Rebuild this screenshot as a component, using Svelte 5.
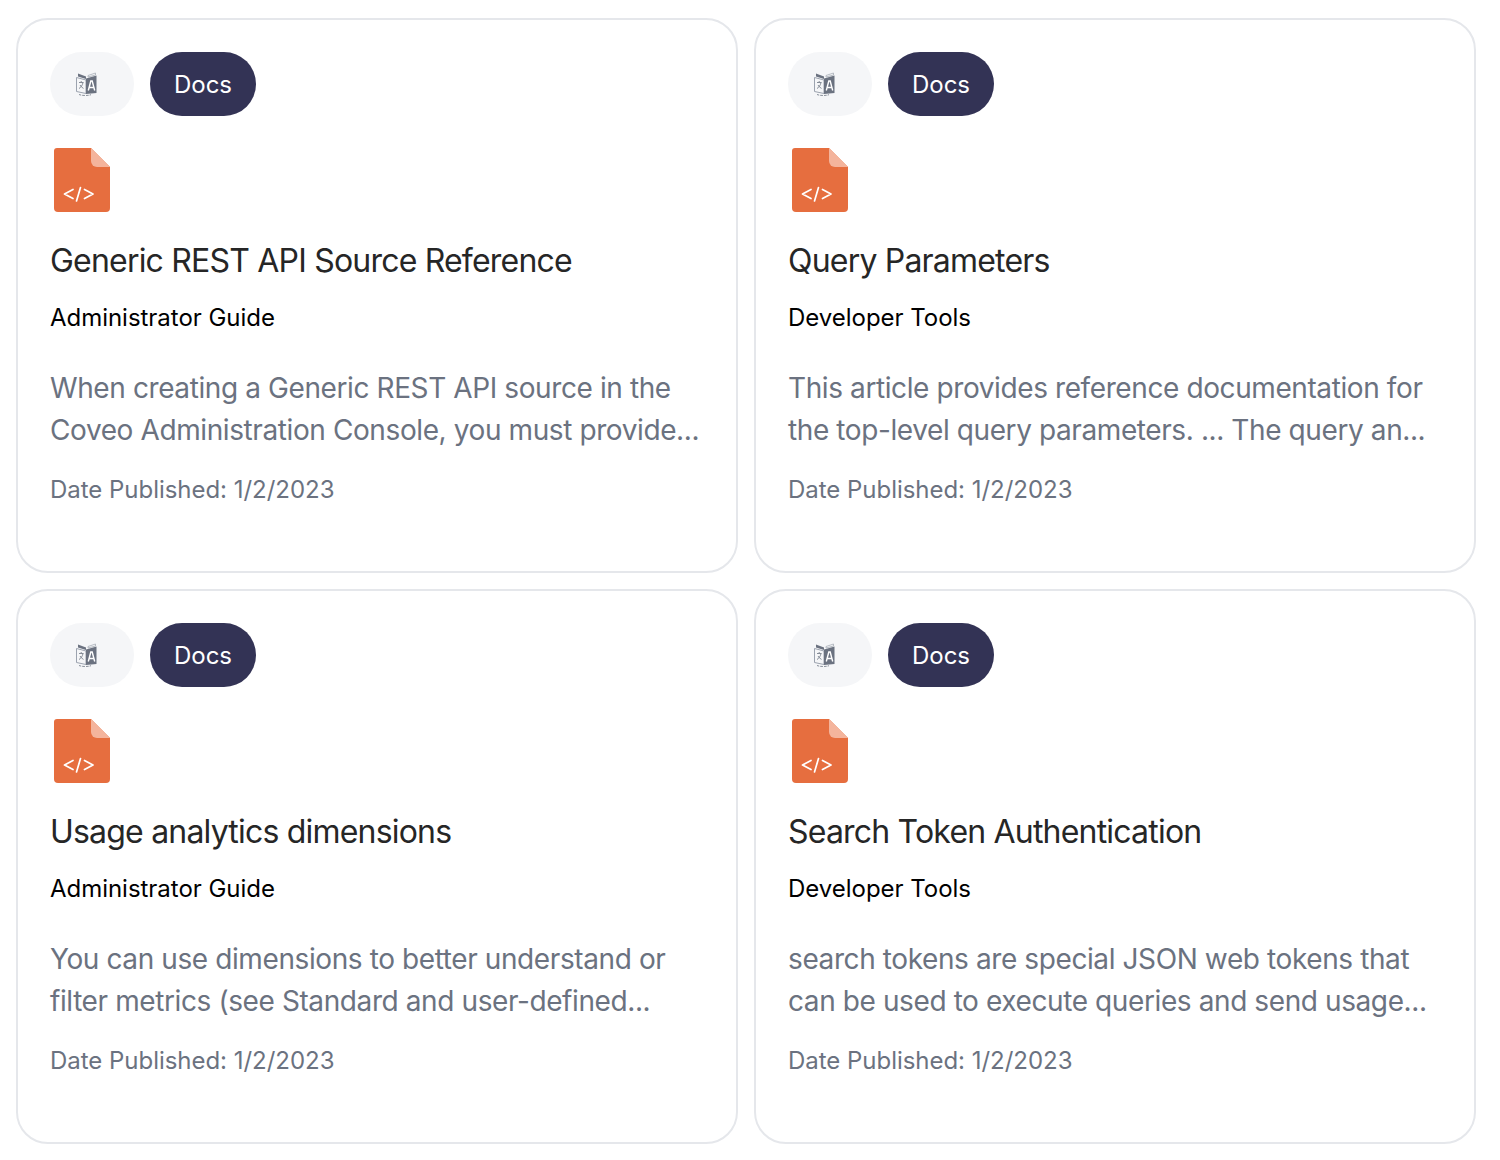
<script>
  const cards = [
    { title: 'Generic REST API Source Reference', category: 'Administrator Guide', text: 'When creating a Generic REST API source in the Coveo Administration Console, you must provide...' },
    { title: 'Query Parameters', category: 'Developer Tools', text: 'This article provides reference documentation for the top-level query parameters. ... The query an...' },
    { title: 'Usage analytics dimensions', category: 'Administrator Guide', text: 'You can use dimensions to better understand or filter metrics (see Standard and user-defined...' },
    { title: 'Search Token Authentication', category: 'Developer Tools', text: 'search tokens are special JSON web tokens that can be used to execute queries and send usage...' }
  ];
</script>

<div class="grid">
  {#each cards as card}
    <article class="card">
      <div class="tags">
        <span class="tag-lang">
          <svg width="24" height="24" viewBox="0 0 24 24" aria-hidden="true">
            <path d="M4 1.500 12 4.500V7L4 4.500z" fill="#6b7280"/>
            <path d="M21.500 1 14 3.500V5L21.500 3z" fill="none" stroke="#a8aeb7" stroke-width=".8"/>
            <path d="M2.500 5.500 12 8v13.500L2.500 19.500z" fill="#f5f6f8" stroke="#9ca3af" stroke-width="1"/>
            <path d="M12 6.500 22.500 3.500V21L12 22z" fill="#6b7280"/>
            <path d="M5 10.500h4.500M7.200 9v1.500M9 10.500c-.6 3-2.200 5-4 6M6 13c.9 1.600 2 2.700 3.500 3.400" fill="none" stroke="#7b828d" stroke-width=".9"/>
            <path d="M14.300 18.500 16.800 9h1.400L20.700 18.500M15.400 15.500h4.200" fill="none" stroke="#fff" stroke-width="1.400"/>
            <path d="M5 22.500c3 1.300 9 1.300 12 .2" fill="none" stroke="#7b828d" stroke-width=".9" stroke-dasharray="2.500 1"/>
          </svg>
        </span>
        <span class="tag-docs">Docs</span>
      </div>
      <svg class="file" width="64" height="64" viewBox="0 0 64 64" aria-hidden="true">
        <path d="M7 0H41L60 19V60a4 4 0 0 1-4 4H8a4 4 0 0 1-4-4V3a3 3 0 0 1 3-3z" fill="#e66e3f"/>
        <path d="M41 0 60 19H47a6 6 0 0 1-6-6z" fill="#f4b49c"/>
        <path d="M23 41.500 14.500 46l8.500 4.500M30.500 39.500l-4 13.500M34.500 41.500 43 46l-8.500 4.500" fill="none" stroke="#fff" stroke-width="1.700" stroke-linecap="round" stroke-linejoin="round"/>
      </svg>
      <h2>{card.title}</h2>
      <p class="category">{card.category}</p>
      <p class="text">{card.text}</p>
      <p class="date">Date Published: 1/2/2023</p>
    </article>
  {/each}
</div>

<style>
  :global(body) {
    background: #fff;
  }

  .grid {
    display: grid;
    grid-template-columns: 722px 722px;
    gap: 16px;
    padding: 18px 16px;
    font-family: Inter, "Liberation Sans", sans-serif;
  }

  .card {
    box-sizing: border-box;
    height: 555px;
    padding: 32px;
    border: 2px solid #e5e7eb;
    border-radius: 32px;
  }

  .tags {
    display: flex;
    gap: 16px;
    height: 64px;
  }

  .tag-lang {
    display: flex;
    align-items: center;
    width: 84px;
    box-sizing: border-box;
    padding-left: 24px;
    border-radius: 32px;
    background: #f5f6f8;
  }

  .tag-docs {
    display: flex;
    align-items: center;
    padding: 0 24px;
    border-radius: 32px;
    background: #333355;
    color: #fff;
    font-size: 24px;
    letter-spacing: -0.02px;
  }

  .file {
    display: block;
    margin-top: 32px;
  }

  h2 {
    margin: 24px 0 0;
    font-size: 32px;
    font-weight: 400;
    line-height: 50px;
    letter-spacing: -0.8px;
    color: #262626;
  }

  .category {
    margin: 16px 0 0;
    font-size: 24px;
    line-height: 32px;
    letter-spacing: -0.03px;
    color: #000;
  }

  .text {
    margin: 33px 0 0;
    font-size: 28px;
    line-height: 42px;
    letter-spacing: -0.4px;
    color: #6b7280;
  }

  .date {
    margin: 23px 0 0;
    font-size: 24px;
    line-height: 32px;
    letter-spacing: -0.03px;
    color: #6b7280;
  }
</style>
